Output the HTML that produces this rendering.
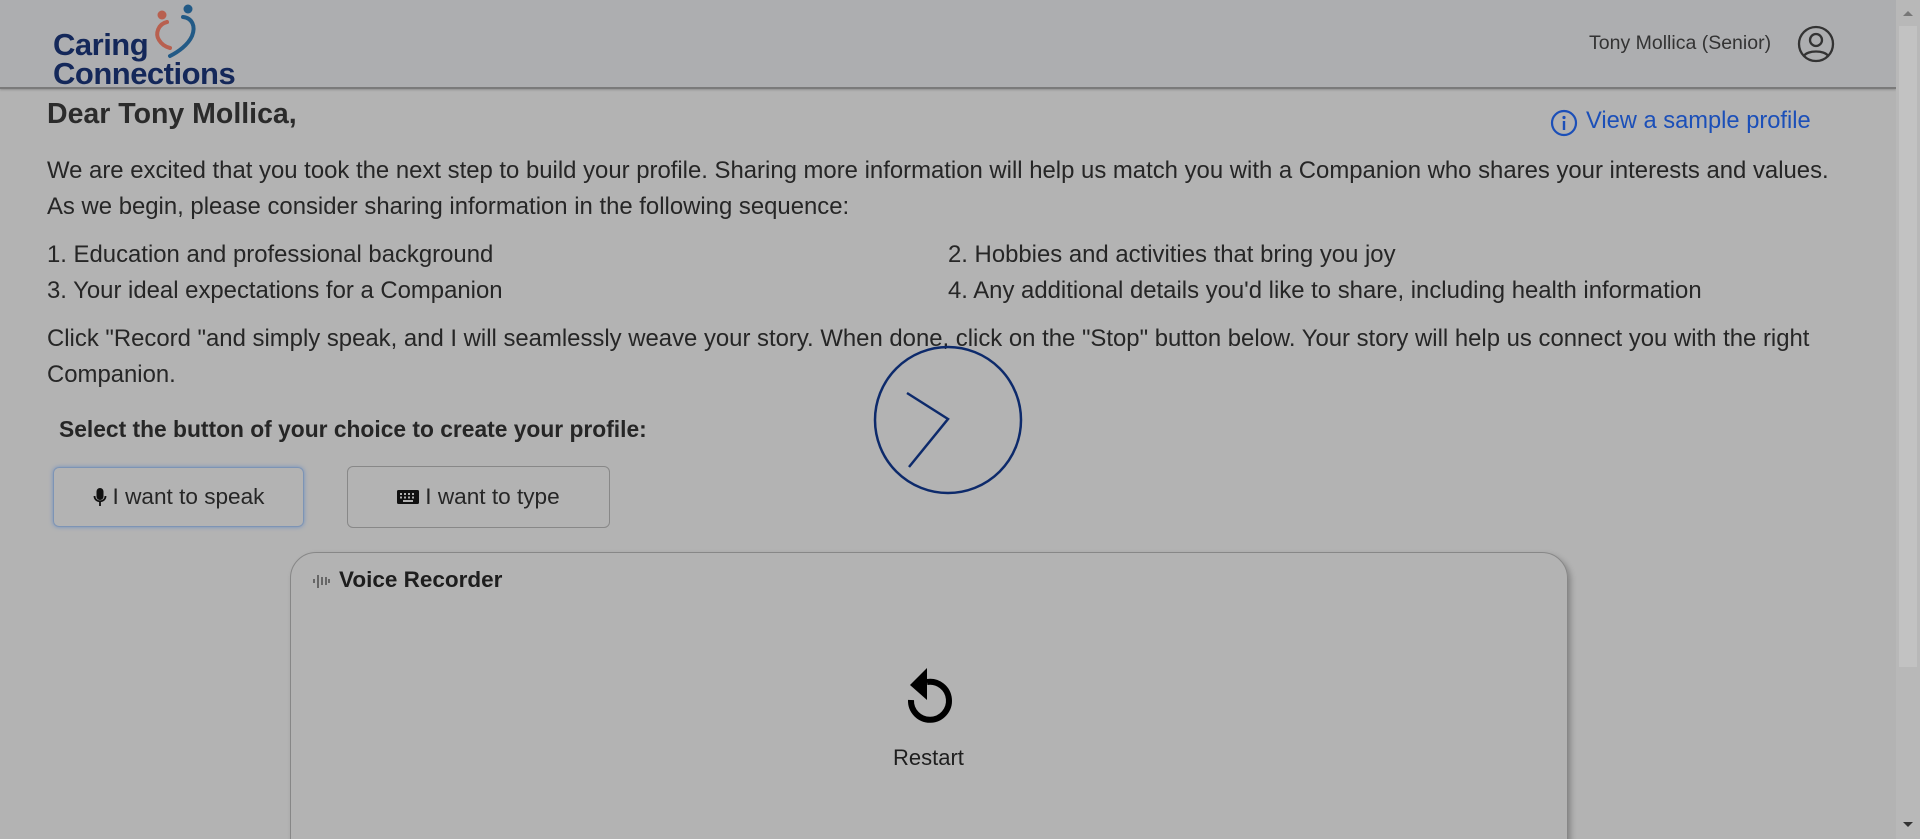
<!DOCTYPE html>
<html><head><meta charset="utf-8"><style>
*{margin:0;padding:0;box-sizing:border-box}
html,body{width:1920px;height:839px;overflow:hidden;background:#b3b3b3;font-family:"Liberation Sans",sans-serif;color:#262626}
#w{position:relative;width:1920px;height:839px;overflow:hidden}
.hdr{position:absolute;left:0;top:0;width:1896px;height:89px;background:#adaeb0;border-bottom:2px solid #7a7a7a;box-shadow:0 1px 2px rgba(0,0,0,.2)}
.logo{position:absolute;left:53px;top:30px;font-weight:bold;color:#14285a;font-size:31px;line-height:29px;letter-spacing:-0.5px}
.user{position:absolute;left:1589px;top:32px;font-size:19.5px;color:#333}
.t{position:absolute;white-space:nowrap}
.p{font-size:23.9px}
.sb{position:absolute;left:1896px;top:0;width:24px;height:839px;background:#b8b8b8}
.thumb{position:absolute;left:1899px;top:26px;width:18px;height:641px;background:#c2c2c2}
.btn{position:absolute;border-radius:6px;font-size:22.6px;display:flex;align-items:center;justify-content:center;gap:6px}
.card{position:absolute;left:290px;top:552px;width:1278px;height:320px;border:1.5px solid #878787;border-radius:26px;box-shadow:3px 3px 6px rgba(0,0,0,.25)}
</style></head><body><div id="w">
<div class="hdr">
<svg style="position:absolute;left:148px;top:2px" width="52" height="66" viewBox="148 2 52 66">
<circle cx="162" cy="15" r="4.5" fill="#b8604f"/>
<circle cx="188" cy="9" r="4.5" fill="#225a86"/>
<path d="M167 22 C158 24 155 34 159 40 C162 45 166 47 170 48" fill="none" stroke="#b8604f" stroke-width="4" stroke-linecap="round"/>
<path d="M183 17 C192 18 196 26 192 36 C188 45 178 52 170 56" fill="none" stroke="#225a86" stroke-width="4" stroke-linecap="round"/>
</svg>
<div class="logo">Caring<br>Connections</div>
<div class="user">Tony Mollica (Senior)</div>
<svg style="position:absolute;left:1797px;top:25px" width="38" height="38" viewBox="0 0 38 38" fill="none" stroke="#333" stroke-width="2.3">
<circle cx="19" cy="19" r="17"/><circle cx="19" cy="15" r="6"/><path d="M7 31 C10 25 28 25 31 31"/></svg>
</div>
<div class="sb"></div><div class="thumb"></div>
<svg style="position:absolute;left:1899px;top:8px" width="18" height="10"><path d="M4 8 L9 3 L14 8Z" fill="#777"/></svg>
<svg style="position:absolute;left:1899px;top:820px" width="18" height="10"><path d="M4 2 L9 7 L14 2Z" fill="#333"/></svg>

<div class="t" style="left:47px;top:98px;font-size:28.5px;font-weight:bold;color:#2b2b2b">Dear Tony Mollica,</div>
<svg style="position:absolute;left:1550px;top:109px" width="28" height="28" viewBox="0 0 28 28"><circle cx="14" cy="14" r="12" fill="none" stroke="#1b4fb8" stroke-width="2.2"/><circle cx="14" cy="8.5" r="1.6" fill="#1b4fb8"/><rect x="12.8" y="12" width="2.4" height="9" fill="#1b4fb8"/></svg>
<div class="t" style="left:1586px;top:108px;font-size:23.7px;color:#1b4fb8">View a sample profile</div>

<div class="t p" style="left:47px;top:157px">We are excited that you took the next step to build your profile. Sharing more information will help us match you with a Companion who shares your interests and values.</div>
<div class="t p" style="left:47px;top:193px">As we begin, please consider sharing information in the following sequence:</div>
<div class="t p" style="left:47px;top:241px">1. Education and professional background</div>
<div class="t p" style="left:948px;top:241px">2. Hobbies and activities that bring you joy</div>
<div class="t p" style="left:47px;top:277px">3. Your ideal expectations for a Companion</div>
<div class="t p" style="left:948px;top:277px">4. Any additional details you'd like to share, including health information</div>
<div class="t p" style="left:47px;top:325px">Click "Record "and simply speak, and I will seamlessly weave your story. When done, click on the "Stop" button below. Your story will help us connect you with the right</div>
<div class="t p" style="left:47px;top:361px">Companion.</div>

<svg style="position:absolute;left:872px;top:344px" width="152" height="152" viewBox="872 344 152 152"><circle cx="948" cy="420" r="73" fill="none" stroke="#0d2a6b" stroke-width="2.5"/><path d="M907 393 L948 419 L909 467" fill="none" stroke="#0d2a6b" stroke-width="2.5"/></svg>

<div class="t" style="left:59px;top:416px;font-size:22.8px;font-weight:bold;color:#262626">Select the button of your choice to create your profile:</div>
<div class="btn" style="left:53px;top:467px;width:251px;height:60px;border:1.5px solid #7d94b5;box-shadow:0 0 4px #6f8fc0"><svg width="14" height="20" viewBox="0 0 14 20"><rect x="3.5" y="1" width="7" height="12" rx="3.5" fill="#111"/><path d="M1.5 9 C1.5 16 12.5 16 12.5 9" fill="none" stroke="#111" stroke-width="1.8"/><rect x="6.1" y="14" width="1.8" height="5" fill="#111"/></svg>I want to speak</div>
<div class="btn" style="left:347px;top:466px;width:263px;height:62px;border:1.2px solid #888"><svg width="22" height="16" viewBox="0 0 22 16"><rect x="0" y="1" width="22" height="14" rx="1.5" fill="#111"/><g fill="#b3b3b3"><rect x="3" y="4" width="2" height="2"/><rect x="7" y="4" width="2" height="2"/><rect x="11" y="4" width="2" height="2"/><rect x="15" y="4" width="2" height="2"/><rect x="3" y="7.5" width="2" height="2"/><rect x="7" y="7.5" width="2" height="2"/><rect x="11" y="7.5" width="2" height="2"/><rect x="15" y="7.5" width="2" height="2"/><rect x="6" y="11" width="10" height="2"/></g></svg>I want to type</div>

<div class="card"></div>
<svg style="position:absolute;left:312px;top:571px" width="20" height="20" viewBox="0 0 20 20" stroke="#333" stroke-width="1.2"><path d="M2 8v4M6 4v13M10 6v8M14 6v8M17 8v4"/></svg>
<div class="t" style="left:339px;top:567px;font-size:22.5px;font-weight:600;color:#1e1e1e">Voice Recorder</div>
<svg style="position:absolute;left:894px;top:660px" width="62" height="64" viewBox="0 0 62 64"><path d="M17 40 A19 19 0 1 0 33 22" fill="none" stroke="#000" stroke-width="6"/><path d="M33 8 L16 25 L33 40Z" fill="#000"/></svg>
<div class="t" style="left:893px;top:745px;font-size:22px;color:#1e1e1e">Restart</div>
</div></body></html>
